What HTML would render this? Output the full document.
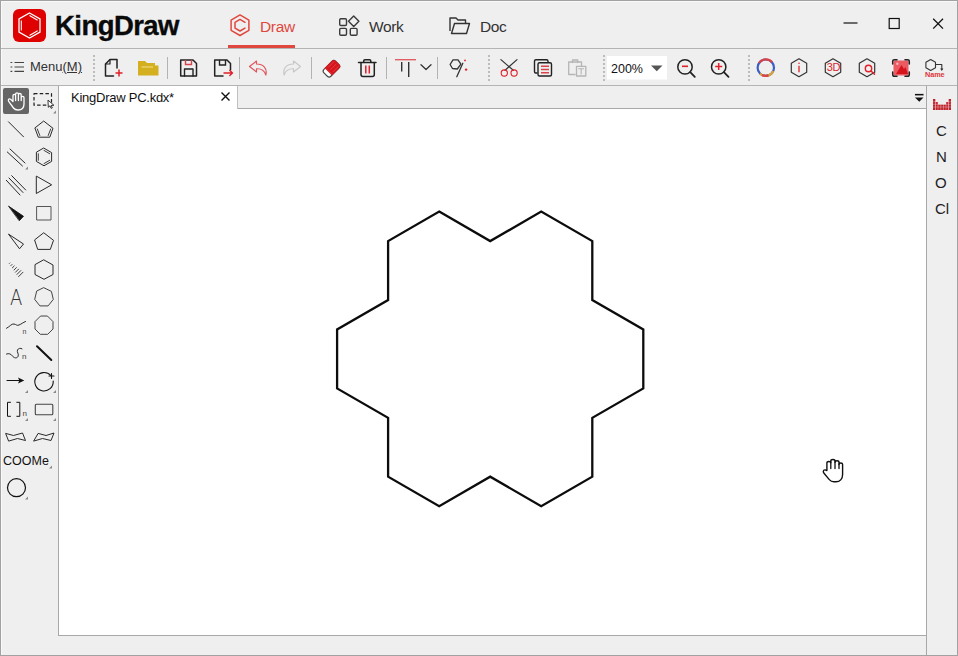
<!DOCTYPE html>
<html lang="en">
<head>
<meta charset="utf-8">
<title>KingDraw</title>
<style>
*{box-sizing:border-box;margin:0;padding:0}
html,body{width:958px;height:656px;overflow:hidden;background:#efefef;font-family:"Liberation Sans","DejaVu Sans",sans-serif;color:#222}
#win{position:absolute;left:0;top:0;width:958px;height:656px;background:#efefef;border:1px solid #a2a2a2;box-shadow:inset 1px 1px 0 #f9f9f9}
.abs{position:absolute}
.hl{position:absolute;height:1px;background:#b4b4b4}
.vl{position:absolute;width:1px;background:#b9b9b9}
.dsep{position:absolute;width:0;border-left:2px dotted #bcbcbc;top:55px;height:26px}
.sep{position:absolute;width:1px;background:#b3b3b3;top:57px;height:22px}
.t{position:absolute;white-space:nowrap;line-height:1}
svg{position:absolute;overflow:visible}
</style>
</head>
<body>
<div id="win"></div>

<!-- title bar -->
<div class="hl" style="left:1px;top:48px;width:956px"></div>
<svg style="left:13px;top:9px" width="33" height="33" viewBox="0 0 33 33">
  <rect x="0" y="0" width="33" height="33" rx="6" fill="#df0000"/>
  <polygon points="16.5,4 27,10 27,23 16.5,29 6,23 6,10" fill="none" stroke="#fff" stroke-width="1.3"/>
  <path d="M16.5 6.6 L24.6 11.2 M8.3 11.5 V21.5 M16.5 26.4 L24.6 21.8" stroke="#fff" stroke-width="1.1" fill="none"/>
</svg>
<div class="t" id="brand" style="left:55px;top:11.500px;font-size:27.500px;font-weight:bold;color:#0a0a0a;letter-spacing:-0.550px;-webkit-text-stroke:0.350px #0a0a0a">KingDraw</div>

<!-- tabs -->
<svg style="left:0;top:0" width="480" height="48" viewBox="0 0 480 48" fill="none">
  <polygon points="240,14.900 248.900,20.050 248.900,30.350 240,35.500 231.100,30.350 231.100,20.050" stroke="#e0483f" stroke-width="1.500" stroke-linejoin="round"/>
  <path d="M245 22.300 L240 19.400 L235 22.300 V28.100 L240 31 L245 28.100" stroke="#e0483f" stroke-width="1.500" stroke-linejoin="round" stroke-linecap="round"/>
  <g stroke="#3a3a3a" stroke-width="1.400" stroke-linejoin="round">
    <rect x="339.700" y="18.700" width="6.800" height="6.800" rx="1.200"/>
    <rect x="339.700" y="28.400" width="6.800" height="6.800" rx="1.200"/>
    <rect x="350.300" y="28.400" width="6.800" height="6.800" rx="1.200"/>
    <polygon points="353.700,16 358.900,21.200 353.700,26.400 348.500,21.200"/>
  </g>
</svg>
<div class="t" style="left:260px;top:18.500px;font-size:15.500px;letter-spacing:-0.350px;color:#e0483f">Draw</div>
<div class="abs" style="left:228px;top:45px;width:67px;height:3px;background:#e0483f"></div>
<div class="t" style="left:369px;top:18.500px;font-size:15.500px;letter-spacing:-0.350px;color:#333">Work</div>

<svg style="left:447.800px;top:14.800px" width="22" height="20" viewBox="0 0 22 20">
  <path d="M2 16 V3 H8 L10 5 H17.500 V8.500" fill="none" stroke="#333" stroke-width="1.4" stroke-linejoin="round"/>
  <path d="M3.5 18.5 L6.5 8.500 H21.500 L18.500 18.500 Z" fill="none" stroke="#333" stroke-width="1.4" stroke-linejoin="round"/>
</svg>
<div class="t" style="left:480px;top:18.500px;font-size:15.500px;letter-spacing:-0.350px;color:#333">Doc</div>

<!-- window controls -->
<svg style="left:840px;top:12px" width="110" height="24" viewBox="840 12 110 24">
  <path d="M843.500 23 H857.500" stroke="#111" stroke-width="1.200"/>
  <rect x="889.200" y="18.500" width="10" height="10" fill="none" stroke="#111" stroke-width="1.200"/>
  <path d="M933.200 18.800 L943 28.600 M943 18.800 L933.200 28.600" stroke="#111" stroke-width="1.300"/>
</svg>

<!-- toolbar -->
<div class="hl" style="left:1px;top:85px;width:956px"></div>
<div id="toolbar">
<svg style="left:0;top:0" width="958" height="90" viewBox="0 0 958 90" fill="none" stroke-linecap="round" stroke-linejoin="round">
  <!-- menu icon -->
  <g stroke="#444" stroke-width="1.200" stroke-linecap="butt">
    <path d="M10.500 62.500 H12.300 M14.500 62.500 H24 M10.500 67 H12.300 M14.500 67 H24 M10.500 71.300 H12.300 M14.500 71.300 H24"/>
  </g>
  <!-- new doc -->
  <g stroke="#222" stroke-width="1.5">
    <path d="M117 68 V59.5 H110 L105.5 64 V76 H113.5"/>
    <path d="M110 59.5 V64 H105.5" stroke-width="1.2"/>
  </g>
  <path d="M115.5 73 H122.5 M119 69.5 V76.5" stroke="#e0202a" stroke-width="1.5" stroke-linecap="butt"/>
  <!-- folder -->
  <path d="M138 75.5 V61 H145 L147 63 H155 V65.5 H158.5 V75.5 Z" fill="#d4b021" stroke="none"/>
  <path d="M141.5 67 H153" stroke="#e7cf63" stroke-width="1.6" stroke-linecap="butt"/>
  <!-- save -->
  <g stroke="#222" stroke-width="1.5">
    <path d="M180.7 60 H193 L196.5 63.5 V76 H180.7 Z"/>
    <path d="M184.5 76 V69 H193 V76" stroke-width="1.4"/>
  </g>
  <path d="M185.5 60.5 V64.5 H191.5 V60.5" stroke="#d9434c" stroke-width="1.4" stroke-linejoin="miter"/>
  <!-- save as -->
  <g stroke="#222" stroke-width="1.5">
    <path d="M223 76 H214.7 V60 H227 L230.5 63.500 V70"/>
    <path d="M219.500 60.5 V65 H225.5 V60.5" stroke-width="1.4" stroke-linejoin="miter"/>
  </g>
  <path d="M224 73 H232.500 M229.800 70.500 L232.500 73 L229.800 75.500" stroke="#e0202a" stroke-width="1.4"/>
  <!-- undo -->
  <path d="M256.500 61 L249.500 66.500 L256.500 72 V68.800 C261.500 68.500 264.500 70.500 265.800 75 C267.500 68.500 263.500 64 256.500 64 Z" stroke="#e0555c" stroke-width="1.2"/>
  <!-- redo -->
  <path d="M293.500 61 L300.500 66.500 L293.500 72 V68.800 C288.500 68.500 285.500 70.500 284.200 75 C282.500 68.500 286.500 64 293.500 64 Z" stroke="#c8c8c8" stroke-width="1.2"/>
  <!-- eraser -->
  <g transform="rotate(-45 332 68.200)">
    <rect x="323" y="63.300" width="16.500" height="9.800" rx="2.500" fill="#fff" stroke="#444" stroke-width="1.100"/>
    <path d="M327.500 63.300 H337 Q339.500 63.300 339.500 65.800 V70.600 Q339.500 73.100 337 73.100 H327.500 Z" fill="#d8141c" stroke="#d8141c" stroke-width="0.900"/>
    <path d="M330 65 H338 M330 68.200 H338 M330 71.400 H338" stroke="#e4555b" stroke-width="0.600"/>
  </g>
  <!-- trash -->
  <g stroke="#222" stroke-width="1.500">
    <path d="M358.500 62.500 H376"/>
    <path d="M363.700 62 V61 Q363.700 59.700 365 59.700 H369.500 Q370.800 59.700 370.800 61 V62"/>
    <path d="M361 63 V74.500 Q361 76.500 363 76.500 H372.300 Q374.300 76.500 374.300 74.500 V63"/>
  </g>
  <path d="M365.800 65.500 V73.500 M369.300 65.500 V73.500" stroke="#e0202a" stroke-width="1.500" stroke-linecap="butt"/>
  <!-- text tool -->
  <path d="M395 59.700 H416" stroke="#e0555c" stroke-width="1.300" stroke-linecap="butt"/>
  <path d="M401.700 62 V71.500 M408.700 62 V77" stroke="#333" stroke-width="1.400" stroke-linecap="butt"/>
  <path d="M421 64.800 L426 69.500 L431 64.800" stroke="#333" stroke-width="1.300"/>
  <!-- lasso -->
  <polygon points="453,59.900 458,59.900 460.900,64.200 457.300,69 452.500,68.500 450.100,64.500" stroke="#333" stroke-width="1.300"/>
  <path d="M462.800 63.300 L456.800 76.700" stroke="#333" stroke-width="1.300"/>
  <circle cx="465" cy="60.400" r="0.900" fill="#e0202a"/>
  <circle cx="466.100" cy="69.600" r="1.200" fill="#e0202a"/>
  <!-- scissors -->
  <path d="M500.900 59.600 L513.300 70.300 M517 59.600 L505 70.300" stroke="#333" stroke-width="1.200"/>
  <circle cx="504.300" cy="73" r="3.100" stroke="#e0202a" stroke-width="1.100"/>
  <circle cx="514.100" cy="73" r="3.100" stroke="#e0202a" stroke-width="1.100"/>
  <!-- copy -->
  <g stroke="#222" stroke-width="1.400">
    <path d="M537 73 H535.700 Q534.500 73 534.500 71.500 V61 Q534.500 59.700 536 59.700 H546.500 Q548 59.700 548 61 V62"/>
    <rect x="538" y="62.700" width="13.500" height="13.300" rx="1.500"/>
  </g>
  <path d="M541 66.300 H549 M541 69.500 H549 M541 72.700 H549" stroke="#d9434c" stroke-width="1.500" stroke-linecap="butt"/>
  <!-- paste -->
  <g stroke="#b5b5b5" stroke-width="1.300">
    <path d="M575 74.500 H568.700 V62 H581.500 V66"/>
    <path d="M572.500 62.500 V60 H577.700 V62.500" />
    <rect x="576.500" y="66.300" width="9.300" height="9.700" fill="#efefef"/>
    <path d="M578.700 68.800 H583.600 M581.150 68.800 V74" stroke-width="1.100"/>
  </g>
  <!-- combo -->
  <rect x="607" y="56" width="60" height="23.500" fill="#fff" stroke="none"/>
  <polygon points="651,65.500 662.500,65.500 656.750,71.300" fill="#555" stroke="none"/>
  <!-- zoom out -->
  <g transform="translate(0 0.600)">
  <g stroke="#222" stroke-width="1.500">
    <circle cx="685" cy="66.300" r="7.200"/>
    <path d="M690.200 71.600 L694.800 76.300" stroke-width="1.800"/>
    <circle cx="718.700" cy="66.300" r="7.200"/>
    <path d="M723.900 71.600 L728.500 76.300" stroke-width="1.800"/>
  </g>
  <path d="M682 65.700 H688" stroke="#e0202a" stroke-width="1.600" stroke-linecap="butt"/>
  <path d="M715.200 65.900 H722.200 M718.700 62.400 V69.400" stroke="#e0202a" stroke-width="1.500" stroke-linecap="butt"/>
  </g>
  <!-- colour ring -->
  <g stroke-width="2.200" stroke-linecap="butt">
    <circle cx="765.800" cy="67.700" r="8.200" stroke="#3b5fc4"/>
    <path d="M759 63 A8.200 8.200 0 0 1 772 62.300" stroke="#d8434a"/>
    <path d="M773.300 71 A8.200 8.200 0 0 1 760 73.500" stroke="#d9a23a"/>
    <path d="M768.500 75.400 A8.200 8.200 0 0 1 762 75" stroke="#d8434a"/>
  </g>
  <!-- info hex -->
  <polygon points="799,58.800 806.700,63.200 806.700,72.200 799,76.700 791.300,72.200 791.300,63.200" stroke="#333" stroke-width="1.200"/>
  <path d="M799 65.800 V72.200" stroke="#e0202a" stroke-width="1.300" stroke-linecap="butt"/>
  <circle cx="799" cy="63.300" r="0.800" fill="#e0202a"/>
  <!-- 3D hex -->
  <polygon points="833,58.800 840.700,63.200 840.700,72.200 833,76.700 825.300,72.200 825.300,63.200" stroke="#333" stroke-width="1.200"/>
  <!-- search hex -->
  <polygon points="867,58.800 874.700,63.200 874.700,72.200 867,76.700 859.300,72.200 859.300,63.200" stroke="#333" stroke-width="1.200"/>
  <circle cx="868.500" cy="68.500" r="3.200" stroke="#e0202a" stroke-width="1.400"/>
  <path d="M871 71 L874.500 74.300" stroke="#e0202a" stroke-width="1.500"/>
  <!-- image icon -->
  <rect x="893.500" y="60.500" width="15" height="15" rx="1.500" fill="#ec5b62" stroke="none"/>
  <polygon points="896,74 901.500,65 904,69 905.500,67 908,74" fill="#d6141c" stroke="none"/>
  <circle cx="897.300" cy="63.800" r="1.200" fill="#f6b5b7" stroke="none"/>
  <path d="M892.700 64 V61.500 Q892.700 59.800 894.500 59.800 H897 M905 59.800 H907.500 Q909.300 59.800 909.300 61.500 V64 M909.300 72 V74.500 Q909.300 76.300 907.500 76.300 H905 M897 76.300 H894.500 Q892.700 76.300 892.700 74.500 V72" stroke="#222" stroke-width="1.500"/>
  <!-- name icon -->
  <polygon points="930.700,59.500 935.500,62.200 935.500,67.800 930.700,70.500 925.900,67.800 925.900,62.200" stroke="#333" stroke-width="1.100"/>
  <path d="M936 64.500 H941.800 V69.500" stroke="#333" stroke-width="1.100"/>
  <polygon points="940.200,68.500 943.400,68.500 941.800,71" fill="#333" stroke="none"/>
</svg>
<div class="dsep" style="left:93px"></div>
<div class="dsep" style="left:488px"></div>
<div class="dsep" style="left:603px"></div>
<div class="dsep" style="left:748px"></div>
<div class="sep" style="left:167px"></div>
<div class="sep" style="left:239px"></div>
<div class="sep" style="left:311px"></div>
<div class="sep" style="left:386px"></div>
<div class="sep" style="left:437px"></div>
<div class="t" style="left:30px;top:60px;font-size:13px;color:#333">Menu<span style="text-decoration:underline">(M)</span></div>
<div class="t" style="left:611px;top:63px;font-size:12.500px;color:#111">200%</div>
<div class="t" style="left:826.700px;top:61.800px;font-size:11px;color:#d8262e;letter-spacing:-0.400px">3D</div>
<div class="t" style="left:925px;top:71px;font-size:7.300px;color:#e0353c;font-weight:bold;letter-spacing:-0.100px">Name</div>
</div>

<!-- left panel -->
<div id="left">
<svg style="left:0;top:86px" width="58" height="420" viewBox="0 86 58 420" fill="none" stroke="#2a2a2a" stroke-width="1" stroke-linecap="round" stroke-linejoin="round">
<rect x="3" y="88" width="26" height="26" rx="2" fill="#656565" stroke="none"/>
<path d="M13 101.500 L10.600 99.300 Q9.200 98.300 8.500 99.500 Q8 100.500 9 101.800 L13.500 108 Q15 110 18 110 Q24 110 24 104 V97.500 Q24 96.300 22.600 96.300 Q21.200 96.300 21.200 97.500 V94.800 Q21.200 93.500 19.800 93.500 Q18.400 93.500 18.400 94.800 V94 Q18.400 92.800 17 92.800 Q15.600 92.800 15.600 94 V95.600 Q15.600 94.400 14.300 94.400 Q13 94.400 13 95.600 Z M15.600 95 V100.500 M18.400 95 V100.500 M21.200 97 V100.500" stroke="#fff" stroke-width="1.3"/>
<rect x="34" y="93.700" width="17.500" height="11.500" stroke="#222" stroke-width="1.200" stroke-dasharray="3.500 2.200" stroke-linecap="butt"/>
<path d="M48 100.500 L48.300 107.300 L50 105.800 L51.200 108.400 L52.300 107.900 L51.200 105.400 L53.500 105.300 Z" fill="#fff" stroke="#222" stroke-width="0.900"/>
<polygon points="56,110.5 56,113.5 53,113.5" fill="#8a8a8a" stroke="none"/>
<path d="M8.500 121.800 L23.500 136.800"/>
<polygon points="44,121.300 53,128.300 49.800,137.200 38.300,137.200 35,128.300"/>
<path d="M37.300 129 L39.800 135.500 M50.700 129 L48.200 135.500" stroke-width="0.9"/>
<path d="M7.300 152 L22.500 166 M10 149 L25 163"/>
<polygon points="28,166.5 28,169.5 25,169.5" fill="#8a8a8a" stroke="none"/>
<polygon points="44.0,148.2 51.6,152.6 51.6,161.4 44.0,165.8 36.4,161.4 36.4,152.6"/>
<path d="M38.300 153.700 V160.300 M44 163.600 L49.700 160.300 M44 150.400 L49.700 153.700" stroke-width="0.9"/>
<path d="M6.300 180.300 L20 195 M9 178 L23 192.500 M11.700 175.700 L25.700 190"/>
<polygon points="36.300,176.500 36.300,193.500 51.300,185"/>
<polygon points="8.800,206.300 23.500,216.300 19.500,220.500" fill="#111" stroke="#111" stroke-width="0.8"/>
<rect x="37" y="206.500" width="14" height="13.500" stroke="#555"/>
<polygon points="8.800,234.300 23.500,244 19.800,248.500"/>
<polygon points="44,233 53.500,240.300 50.300,249.400 37.700,249.400 34.700,240.300"/>
<path d="M9.4 263.4 L9.8 263.0" stroke-width="0.9"/>
<path d="M10.9 265.6 L12.0 264.5" stroke-width="0.9"/>
<path d="M12.4 267.8 L14.2 266.0" stroke-width="0.9"/>
<path d="M14.0 270.0 L16.4 267.6" stroke-width="0.9"/>
<path d="M15.5 272.2 L18.6 269.1" stroke-width="0.9"/>
<path d="M17.0 274.4 L20.8 270.6" stroke-width="0.9"/>
<path d="M18.6 276.6 L23.0 272.2" stroke-width="0.9"/>
<polygon points="44,260 53,265 53,274.500 44,279.300 35,274.500 35,265"/>
<polygon points="44.0,287.8 51.4,291.4 53.3,299.4 48.1,305.9 39.9,305.9 34.7,299.4 36.6,291.4" stroke="#444"/>
<path d="M6.500 328.300 C10 326.500 11.500 323.500 14 324 C16.500 324.500 17 326 19 325 C21.500 324 23 322.500 25.500 321.500"/>
<polygon points="47.7,316.3 53.0,321.6 53.0,329.0 47.7,334.3 40.3,334.3 35.0,329.0 35.0,321.6 40.3,316.3" stroke="#444"/>
<path d="M6.500 354 C9 353 11 354 12.500 356 C14 358.300 17 358.500 18 356.500 C19.300 354 16.500 352 17.500 350 C18.500 348 20.500 348 22 348.800"/>
<path d="M37 346.300 L51.300 360" stroke="#111" stroke-width="2"/>
<path d="M7 380.500 H20" stroke="#111" stroke-width="1.100"/>
<polygon points="24.300,380.500 18,377.500 19.300,380.500 18,383.500" fill="#111" stroke="none"/>
<path d="M50.800 375.500 A9.200 9.200 0 1 0 53.200 381" stroke="#111" stroke-width="1.100"/>
<path d="M49 376 H54 M51.500 373.500 V378.500" stroke="#111" stroke-width="1.100"/>
<polygon points="28,390 28,393 25,393" fill="#8a8a8a" stroke="none"/>
<polygon points="56,390 56,393 53,393" fill="#8a8a8a" stroke="none"/>
<path d="M10.500 402.300 H7.500 V416.300 H10.500 M16.800 402.300 H19.800 V416.300 H16.800" stroke="#111"/>
<rect x="35.300" y="404.200" width="17.500" height="10.500" rx="1" stroke="#444" stroke-width="1.100"/>
<polygon points="28,418 28,421 25,421" fill="#8a8a8a" stroke="none"/>
<polygon points="56,418 56,421 53,421" fill="#8a8a8a" stroke="none"/>
<polygon points="6,433.500 13.500,435.500 22.500,433 25.500,440.500 17.500,438.500 9,441"/>
<polygon points="38.500,433.500 46,435.500 54,433 51,440.500 42.500,438.500 34,441"/>
<polygon points="52,465.5 52,468.5 49,468.5" fill="#8a8a8a" stroke="none"/>
<circle cx="16.500" cy="487.700" r="9" stroke="#111" stroke-width="1.200"/>
<polygon points="28,496.5 28,499.5 25,499.5" fill="#8a8a8a" stroke="none"/>
</svg>
<div class="t" style="left:8.800px;top:287.500px;font-size:21px;color:#333;font-family:'DejaVu Sans Light','DejaVu Sans',sans-serif;font-weight:200;transform:scaleX(0.86);transform-origin:50% 50%">A</div>
<div class="t" style="left:22.500px;top:328px;font-size:7px;color:#444">n</div>
<div class="t" style="left:22px;top:353px;font-size:8px;color:#444">n</div>
<div class="t" style="left:22.500px;top:410px;font-size:8px;color:#444">n</div>
<div class="t" style="left:3px;top:455px;font-size:12.500px;color:#111">COOMe</div>
</div>

<!-- tab strip + canvas -->
<div class="abs" style="left:58px;top:108px;width:869px;height:528px;background:#fff;border:1px solid #a8a8a8"></div>
<div class="abs" style="left:58px;top:86px;width:180px;height:23px;background:#fff;border-left:1px solid #a8a8a8;border-right:1px solid #c0c0c0"></div>
<div class="t" style="left:71px;top:91px;font-size:13px;color:#111;letter-spacing:-0.250px">KingDraw PC.kdx*</div>
<svg style="left:220px;top:91px" width="11" height="11" viewBox="0 0 11 11"><path d="M1.5 1.5 L9.5 9.5 M9.5 1.5 L1.5 9.5" stroke="#111" stroke-width="1.4"/></svg>
<svg style="left:913.700px;top:92.800px" width="10.500" height="10" viewBox="0 0 11 10"><path d="M1 1.5 H10" stroke="#111" stroke-width="1.6"/><polygon points="1,4.5 10,4.5 5.5,9" fill="#111"/></svg>

<!-- molecule -->
<svg style="left:0;top:0" width="958" height="656" viewBox="0 0 958 656">
  <polygon points="439.2,211.6 490.2,241.1 541.2,211.6 592.3,241.1 592.3,300.0 643.3,329.4 643.3,388.4 592.3,417.8 592.3,476.7 541.2,506.2 490.2,476.7 439.2,506.2 388.1,476.7 388.1,417.8 337.1,388.4 337.1,329.4 388.1,300.0 388.1,241.1" fill="none" stroke="#0c0c0c" stroke-width="2.3" stroke-linejoin="miter"/>
</svg>

<!-- right panel -->
<div class="vl" style="left:926px;top:86px;height:569px;background:#a8a8a8"></div>
<div id="right">
<svg style="left:0;top:0" width="958" height="656" viewBox="0 0 958 656" fill="none">
  <path d="M826.900 470.500 L825.200 469.900 Q823.600 469.700 823.300 471.300 Q823.200 472.300 824 473.200 L829.300 479.600 Q831.200 481.800 833.800 481.800 H836 C839.800 481.800 842.600 479 842.600 474.500 V464.500 Q842.600 463 840.800 463 Q839 463 839 464.500 V462.300 Q839 460.800 837 460.800 Q835 460.800 835 462.300 V461 Q835 459.500 832.900 459.500 Q830.800 459.500 830.800 461 V462.800 Q830.800 461.500 828.900 461.500 Q826.900 461.500 826.900 463 Z" fill="#fff" stroke="#111" stroke-width="1.4" stroke-linejoin="round"/>
  <path d="M830.800 462 V468.500 M835 462 V468.500 M839 464 V468.500" stroke="#111" stroke-width="1.3" stroke-linecap="round"/>
  <g fill="#c2232b">
    <rect x="933" y="99" width="2.500" height="11"/>
    <rect x="935.500" y="102" width="2.500" height="8"/>
    <rect x="938" y="104.500" width="8.500" height="5.500"/>
    <rect x="946" y="102" width="2.500" height="8"/>
    <rect x="948.500" y="99" width="2.500" height="11"/>
  </g>
  <path d="M933 101.700 H951 M933 104.300 H951 M933 107 H951 M935.500 99 V110 M938 99 V110 M940.800 99 V110 M943.500 99 V110 M946 99 V110 M948.500 99 V110" stroke="#efefef" stroke-width="0.5" opacity="0.7"/>
</svg>
</div>
<div class="t" style="left:936px;top:123px;font-size:15px;color:#222">C</div>
<div class="t" style="left:936px;top:149px;font-size:15px;color:#222">N</div>
<div class="t" style="left:935px;top:175px;font-size:15px;color:#222">O</div>
<div class="t" style="left:935px;top:201px;font-size:15px;color:#222">Cl</div>

</body>
</html>
